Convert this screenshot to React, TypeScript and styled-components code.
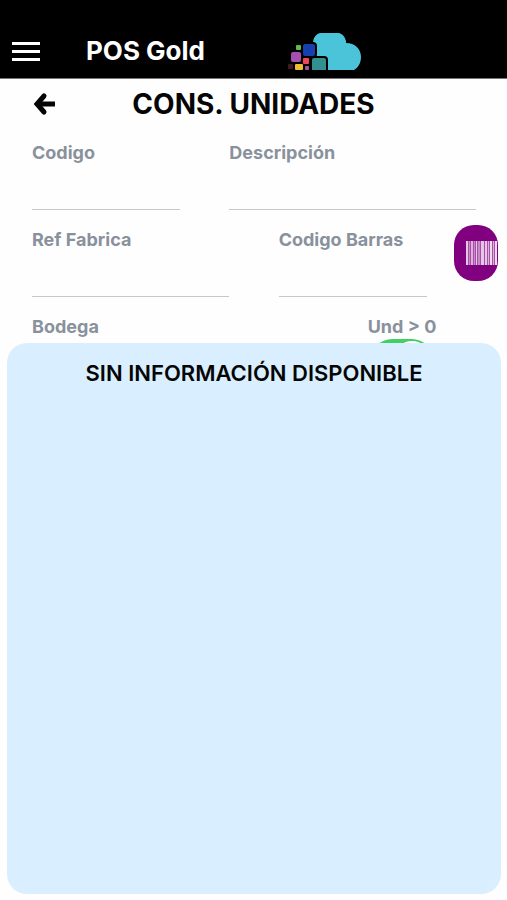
import React from "react";
import styled, { createGlobalStyle } from "styled-components";

const GlobalStyle = createGlobalStyle`
  *, *::before, *::after { box-sizing: border-box; }
  body {
    margin: 0;
    background: #fefefe;
    color: #050505;
    font-family: Inter, "Liberation Sans", sans-serif;
  }
`;

const Page = styled.div`
  display: flex;
  flex-direction: column;
  min-height: 100vh;
  padding-bottom: 6px;
`;

const TopBar = styled.header`
  display: flex;
  align-items: center;
  padding: 24px 12px 0;
  height: 79px;
  background: #000;
  border-bottom: 1px solid #777;
`;

const IconButton = styled.button`
  display: flex;
  align-items: center;
  justify-content: center;
  flex: none;
  padding: 0;
  border: 0;
  background: none;
  color: inherit;
  cursor: pointer;
`;

const MenuButton = styled(IconButton)`
  width: 28px;
  height: 28px;
  color: #fff;
`;

const Brand = styled.span`
  margin-left: 46px;
  color: #fff;
  font-size: 26px;
  font-weight: 700;
  line-height: 32px;
`;

const Logo = styled.svg`
  margin-left: 82px;
  width: 74px;
  height: 38px;
`;

const TitleBar = styled.div`
  display: grid;
  grid-template-columns: 24px 1fr 24px;
  align-items: center;
  padding: 0 32px;
  height: 50px;
`;

const Title = styled.h1`
  margin: 0;
  font-size: 28px;
  font-weight: 700;
  line-height: 34px;
  text-align: center;
  white-space: nowrap;
`;

const Form = styled.form`
  position: relative;
  display: grid;
  grid-template-columns: repeat(9, 1fr);
  row-gap: 18px;
  margin: 12px 31px 0 32px;
`;

const Field = styled.div<{ $start: number; $span: number; $center?: boolean }>`
  grid-column: ${(p) => p.$start} / span ${(p) => p.$span};
  display: flex;
  flex-direction: column;
  align-items: ${(p) => (p.$center ? "center" : "stretch")};
  min-width: 0;
`;

const Label = styled.label`
  color: #89919c;
  font-size: 18px;
  font-weight: 700;
  line-height: 24px;
  white-space: nowrap;
`;

const TextInput = styled.input`
  width: 100%;
  height: 45px;
  padding: 0;
  border: 0;
  border-bottom: 1px solid #c4c8c9;
  border-radius: 0;
  background: transparent;
  font: inherit;
  font-size: 18px;
  outline: none;
`;

const Select = styled.select`
  width: 100%;
  height: 40px;
  border: 0;
  appearance: none;
  background: transparent;
  font: inherit;
  font-size: 18px;
`;

const Switch = styled.input`
  appearance: none;
  display: flex;
  justify-content: flex-end;
  flex: none;
  width: 60px;
  height: 40px;
  margin: 0;
  padding: 2px;
  border-radius: 20px;
  background: #c8ccd0;

  &:checked {
    background: #43cf62;
  }

  &::before {
    content: "";
    width: 36px;
    height: 36px;
    border-radius: 50%;
    background: #fff;
  }
`;

const ScanButton = styled(IconButton)`
  position: absolute;
  top: 84px;
  right: -22px;
  width: 44px;
  height: 56px;
  padding-left: 11px;
  border-radius: 20px;
  background: #800080;
`;

const Results = styled.main`
  position: relative;
  flex: 1;
  margin: -36px 6px 0 7px;
  padding: 16px;
  border-radius: 20px;
  background: #d9efff;
`;

const EmptyMessage = styled.p`
  margin: 0;
  font-size: 22px;
  font-weight: 600;
  line-height: 28px;
  text-align: center;
`;

const bars = [
  { x: 0, w: 2, shade: "#e6c6e6" },
  { x: 3, w: 1, shade: "#c58ac5" },
  { x: 5, w: 2, shade: "#dcb2dc" },
  { x: 8, w: 1, shade: "#c58ac5" },
  { x: 10, w: 1, shade: "#e6c6e6" },
  { x: 12, w: 2, shade: "#c58ac5" },
  { x: 15, w: 3, shade: "#e6c6e6" },
  { x: 19, w: 2, shade: "#e6c6e6" },
  { x: 22, w: 1, shade: "#dcb2dc" },
  { x: 24, w: 2, shade: "#efdcef" },
  { x: 27, w: 1, shade: "#dcb2dc" },
  { x: 29, w: 2, shade: "#efdcef" },
];

export default function App() {
  return (
    <>
      <GlobalStyle />
      <Page>
        <TopBar>
          <MenuButton type="button" aria-label="Menú">
            <svg width="28" height="20" viewBox="0 0 28 20" fill="currentColor">
              <rect y="1" width="28" height="3" />
              <rect y="9" width="28" height="3" />
              <rect y="17" width="28" height="3" />
            </svg>
          </MenuButton>
          <Brand>POS Gold</Brand>
          <Logo viewBox="0 0 74 38" aria-hidden="true">
            <path
              d="M28 38V15L26 10L27 6Q30 1 34 1H52Q57 2 59 9V11C68 11 74 17 74 25C74 31 71 36 67 38Z"
              fill="#4bc3d8"
            />
            <g stroke="#000" strokeWidth="2">
              <rect x="15" y="11" width="14" height="14" rx="3" fill="#173fae" />
              <rect x="24" y="25" width="16" height="15" rx="3" fill="#32908f" />
            </g>
            <rect x="9" y="13" width="5" height="5" rx="1" fill="#65b84c" />
            <rect x="4" y="20" width="10" height="10" rx="2" fill="#a650ad" />
            <rect x="16" y="26" width="6" height="6" rx="1" fill="#f0465b" />
            <rect x="1" y="32" width="5" height="5" rx="1" fill="#421a20" />
            <rect x="8" y="32" width="8" height="6" rx="1" fill="#efbd31" />
            <rect x="18" y="34" width="4" height="4" rx="1" fill="#a650ad" />
          </Logo>
        </TopBar>

        <TitleBar>
          <IconButton type="button" aria-label="Volver">
            <svg
              width="24" height="24" viewBox="0 0 24 24" fill="none"
              stroke="currentColor" strokeWidth="5"
            >
              <path
                d="M12 4L5 12L12 20"
                strokeLinecap="round"
              />
              <path d="M6 12H23" />
            </svg>
          </IconButton>
          <Title>CONS. UNIDADES</Title>
        </TitleBar>

        <Form>
          <Field $start={1} $span={3}>
            <Label htmlFor="codigo">Codigo</Label>
            <TextInput id="codigo" />
          </Field>
          <Field $start={5} $span={5}>
            <Label htmlFor="descripcion">Descripción</Label>
            <TextInput id="descripcion" />
          </Field>
          <Field $start={1} $span={4}>
            <Label htmlFor="referencia">Ref Fabrica</Label>
            <TextInput id="referencia" />
          </Field>
          <Field $start={6} $span={3}>
            <Label htmlFor="barras">Codigo Barras</Label>
            <TextInput id="barras" />
          </Field>
          <Field $start={1} $span={5}>
            <Label htmlFor="bodega">Bodega</Label>
            <Select id="bodega" />
          </Field>
          <Field $start={8} $span={1} $center>
            <Label htmlFor="existencias">Und &gt; 0</Label>
            <Switch id="existencias" type="checkbox" defaultChecked />
          </Field>
          <ScanButton type="button" aria-label="Escanear código de barras">
            <svg width="31" height="24" viewBox="0 0 31 24">
              <rect width="31" height="24" fill="#a74fa7" />
              {bars.map((bar) => (
                <rect key={bar.x} x={bar.x} width={bar.w} height="24" fill={bar.shade} />
              ))}
            </svg>
          </ScanButton>
        </Form>

        <Results>
          <EmptyMessage>SIN INFORMACIÓN DISPONIBLE</EmptyMessage>
        </Results>
      </Page>
    </>
  );
}
